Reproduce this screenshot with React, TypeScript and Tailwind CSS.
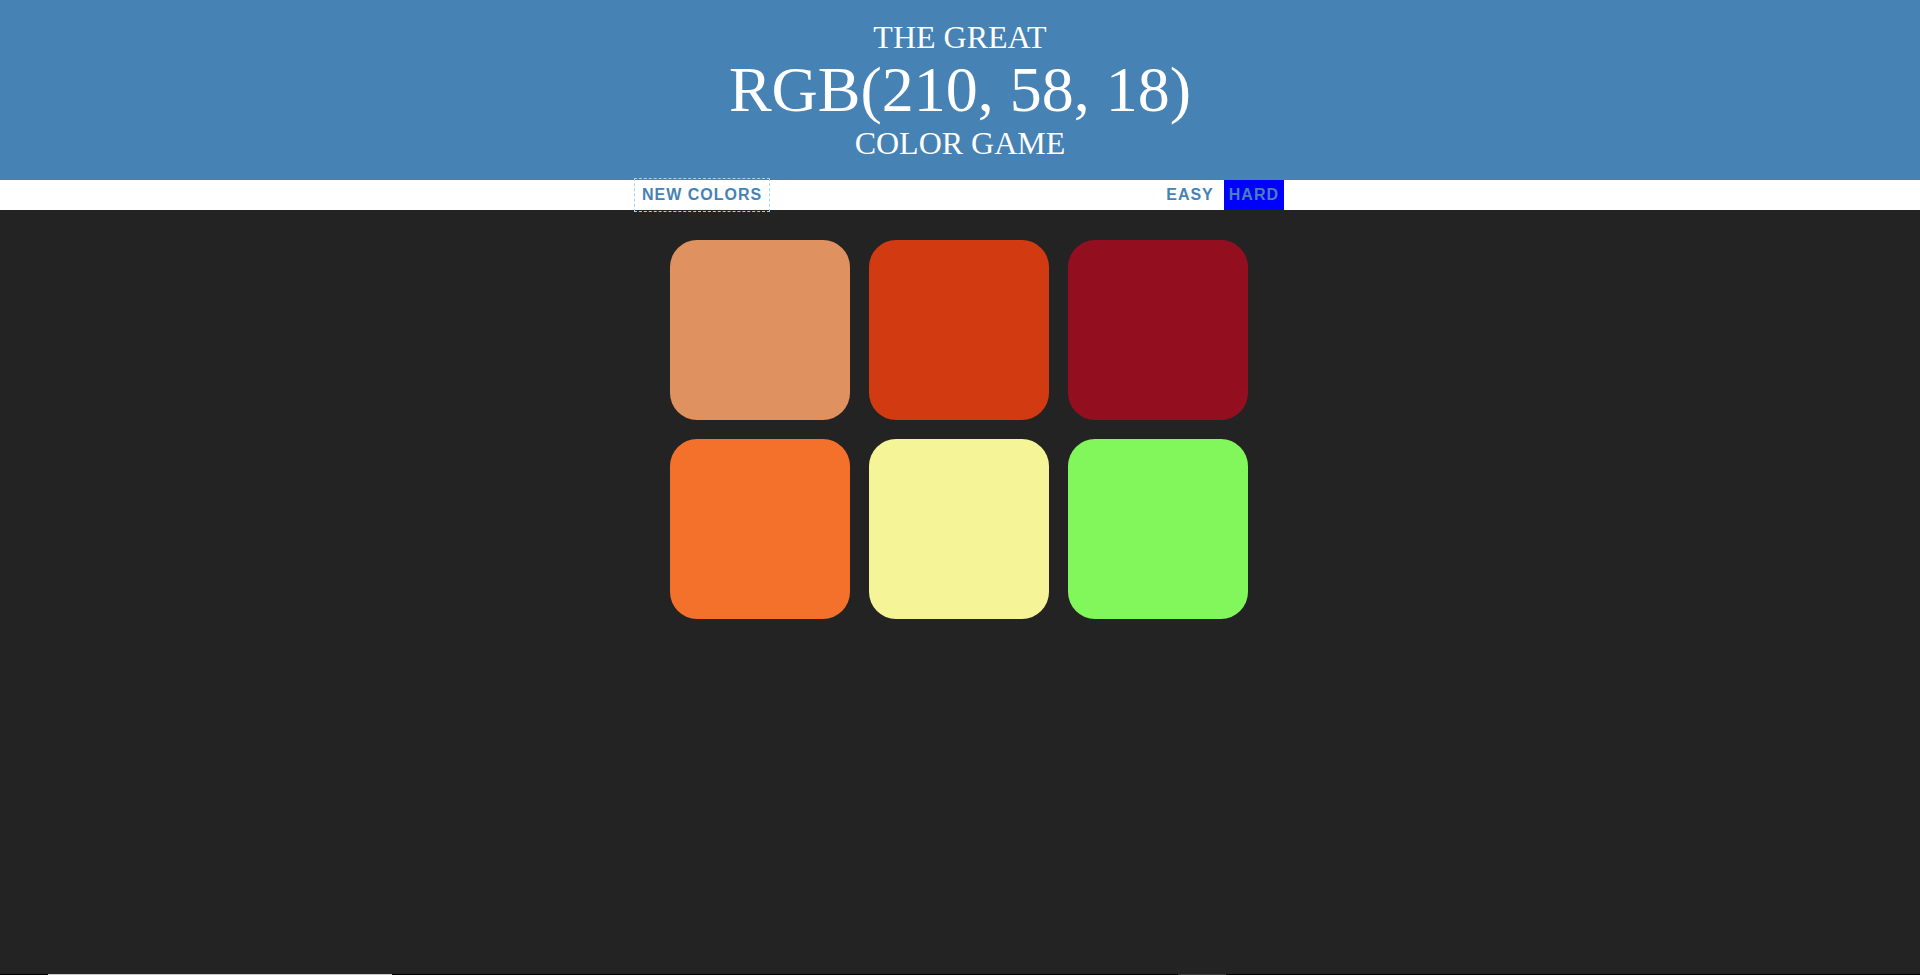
import React from 'react';

const squares = ['#df9260', '#d23a12', '#930f20', '#f3712a', '#f5f597', '#82f75b'];

export default function App() {
    return (
        <div className="min-h-screen flex flex-col bg-[#232323]">
            <h1
                className="m-0 h-[180px] pt-[20px] text-center uppercase text-white font-normal text-[32px] leading-[1.1] bg-[#4682b4]"
                style={{ fontFamily: '"Liberation Serif", "Times New Roman", serif' }}
            >
                The Great
                <br />
                <span className="text-[64px] leading-[1.1]">RGB(210, 58, 18)</span>
                <br />
                Color Game
            </h1>

            <div
                className="h-[30px] bg-white flex justify-center items-stretch gap-[4px] text-[16px] font-bold uppercase tracking-[1px] text-[#4682b4]"
                style={{ fontFamily: '"Liberation Sans", Arial, sans-serif' }}
            >
                <button className="px-[6px] uppercase outline-1 outline-dashed outline-[#9fd6f2] outline-offset-[1px]">
                    New Colors
                </button>
                <span className="w-[384px]" />
                <button className="px-[6px] uppercase">Easy</button>
                <button className="px-[5px] uppercase bg-[#0000ff]">Hard</button>
            </div>

            <div className="flex-1">
                <div className="w-[600px] mx-auto mt-[20px] grid grid-cols-[180px_180px_180px] gap-[19px] pl-[10px] pt-[10px]">
                    {squares.map((c, i) => (
                        <div key={i} className="w-[180px] h-[180px] rounded-[27px]" style={{ backgroundColor: c }} />
                    ))}
                </div>
            </div>

            <div className="h-[1px] flex bg-black">
                <div className="ml-[48px] w-[344px] bg-[#c8c8c8]" />
                <div className="ml-[786px] w-[48px] bg-[#3a3a3a]" />
            </div>
        </div>
    );
}
